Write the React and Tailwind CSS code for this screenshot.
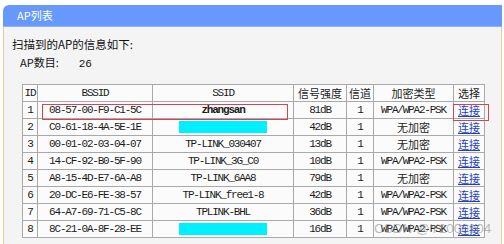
import React from 'react';

const rows = [
  { id: 1, bssid: '08-57-00-F9-C1-5C', ssid: 'zhangsan', sig: '81dB', ch: 1, enc: 'WPA/WPA2-PSK', bold: true },
  { id: 2, bssid: 'C0-61-18-4A-5E-1E', ssid: null, sig: '42dB', ch: 1, enc: '无加密' },
  { id: 3, bssid: '00-01-02-03-04-07', ssid: 'TP-LINK_030407', sig: '13dB', ch: 1, enc: '无加密' },
  { id: 4, bssid: '14-CF-92-B0-5F-90', ssid: 'TP-LINK_3G_C0', sig: '10dB', ch: 1, enc: 'WPA/WPA2-PSK' },
  { id: 5, bssid: 'A8-15-4D-E7-6A-A8', ssid: 'TP-LINK_6AA8', sig: '79dB', ch: 1, enc: '无加密' },
  { id: 6, bssid: '20-DC-E6-FE-38-57', ssid: 'TP-LINK_free1-8', sig: '42dB', ch: 1, enc: 'WPA/WPA2-PSK' },
  { id: 7, bssid: '64-A7-69-71-C5-8C', ssid: 'TPLINK-BHL', sig: '36dB', ch: 1, enc: 'WPA/WPA2-PSK' },
  { id: 8, bssid: '8C-21-0A-8F-28-EE', ssid: null, sig: '16dB', ch: 1, enc: 'WPA/WPA2-PSK' },
];

const mono = "block font-['Liberation_Mono',monospace] text-[11px] leading-[16px] tracking-[-1.2px]";
const cjk = "block font-['Noto_Sans_CJK_SC',sans-serif] text-[11px] leading-[16px]";
const cell = 'border border-[#a9a9a9] bg-[#fbfbfb] text-center p-0 h-[17px] leading-[16px] text-[#1c1c1c] overflow-hidden';

const Enc = ({ v }) =>
  v === '无加密' ? <span className={cjk}>{v}</span> : <span className={mono}>{v}</span>;

export default function App() {
  return (
    <div className="relative w-[504px] h-[244px] overflow-hidden bg-white pt-[5px] pl-[3px] pr-[2px] font-['Noto_Sans_CJK_SC',sans-serif]">
      <div className="h-[22px] rounded-tl-[6px] bg-[#6699fb] border-b border-[#8fb4ff] pl-[14px] text-[11px] leading-[21px] text-white">
        AP列表
      </div>
      <div className="h-[240px] border-x border-[#f2c795] bg-[#f4f4f4]">
        <div className="pl-[8px] pt-[9px] text-[11.5px] leading-[16px] text-[#111]">扫描到的AP的信息如下:</div>
        <div className="mt-[2px] pl-[16px] text-[11px] leading-[16px] text-[#111]">
          AP数目:<span className="ml-[20px] font-['Liberation_Mono',monospace]">26</span>
        </div>
        <table className="ml-[18px] mt-[12px] border-collapse table-fixed w-[462px] border border-[#a9a9a9]">
          <colgroup>
            <col className="w-[15px]" />
            <col className="w-[115px]" />
            <col className="w-[141px]" />
            <col className="w-[53px]" />
            <col className="w-[27px]" />
            <col className="w-[80px]" />
            <col className="w-[31px]" />
          </colgroup>
          <thead>
            <tr>
              <th className={`${cell} font-normal`}><span className={mono}>ID</span></th>
              <th className={`${cell} font-normal`}><span className={mono}>BSSID</span></th>
              <th className={`${cell} font-normal`}><span className={mono}>SSID</span></th>
              <th className={`${cell} font-normal`}><span className={cjk}>信号强度</span></th>
              <th className={`${cell} font-normal`}><span className={cjk}>信道</span></th>
              <th className={`${cell} font-normal`}><span className={cjk}>加密类型</span></th>
              <th className={`${cell} font-normal`}><span className={cjk}>选择</span></th>
            </tr>
          </thead>
          <tbody>
            {rows.map((r) => (
              <tr key={r.id}>
                <td className={cell}><span className={mono}>{r.id}</span></td>
                <td className={cell}><span className={mono}>{r.bssid}</span></td>
                <td className={cell}>
                  {r.ssid ? (
                    <span className={`${mono} ${r.bold ? 'font-bold' : ''}`}>{r.ssid}</span>
                  ) : (
                    <div className="mx-auto h-[12px] w-[88px] bg-[#00f0ff]" />
                  )}
                </td>
                <td className={cell}><span className={mono}>{r.sig}</span></td>
                <td className={cell}><span className={mono}>{r.ch}</span></td>
                <td className={cell}><Enc v={r.enc} /></td>
                <td className={cell}>
                  <a className={`${cjk} text-[#1f3fbf] underline`}>连接</a>
                </td>
              </tr>
            ))}
          </tbody>
        </table>
      </div>

      {/* red annotation boxes */}
      <div className="absolute left-[42px] top-[104px] w-[246px] h-[16px] border border-[#d0454f]" />
      <div className="absolute left-[453px] top-[104px] w-[36px] h-[17px] border border-[#d0454f]" />

      <div className="absolute left-[374px] top-[221px] font-['Liberation_Sans',sans-serif] text-[13.5px] leading-[16px] text-[rgba(120,120,120,0.5)] whitespace-nowrap">
        CSDN @Y2000104
      </div>
    </div>
  );
}
